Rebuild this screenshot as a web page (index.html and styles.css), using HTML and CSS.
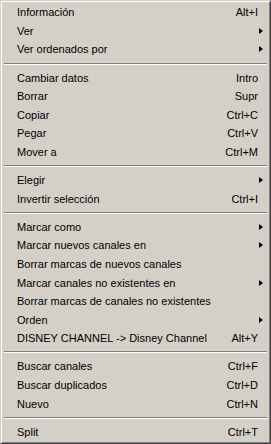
FILE: index.html
```html
<!DOCTYPE html>
<html>
  <head>
    <meta charset="UTF-8">
    <title>Menú</title>
    <link rel="stylesheet" href="styles.css">
  </head>
  <body>
    <div class="menu">
      <div class="item"><span class="label">Información</span><span class="key">Alt+I</span><span class="sub"></span></div>
      <div class="item"><span class="label">Ver</span><span class="key"></span><span class="sub"><i class="arrow"></i></span></div>
      <div class="item"><span class="label">Ver ordenados por</span><span class="key"></span><span class="sub"><i class="arrow"></i></span></div>
      <div class="sep"></div>
      <div class="item"><span class="label">Cambiar datos</span><span class="key">Intro</span><span class="sub"></span></div>
      <div class="item"><span class="label">Borrar</span><span class="key">Supr</span><span class="sub"></span></div>
      <div class="item"><span class="label">Copiar</span><span class="key">Ctrl+C</span><span class="sub"></span></div>
      <div class="item"><span class="label">Pegar</span><span class="key">Ctrl+V</span><span class="sub"></span></div>
      <div class="item"><span class="label">Mover a</span><span class="key">Ctrl+M</span><span class="sub"></span></div>
      <div class="sep"></div>
      <div class="item"><span class="label">Elegir</span><span class="key"></span><span class="sub"><i class="arrow"></i></span></div>
      <div class="item"><span class="label">Invertir selección</span><span class="key">Ctrl+I</span><span class="sub"></span></div>
      <div class="sep"></div>
      <div class="item"><span class="label">Marcar como</span><span class="key"></span><span class="sub"><i class="arrow"></i></span></div>
      <div class="item"><span class="label">Marcar nuevos canales en</span><span class="key"></span><span class="sub"><i class="arrow"></i></span></div>
      <div class="item"><span class="label">Borrar marcas de nuevos canales</span><span class="key"></span><span class="sub"></span></div>
      <div class="item"><span class="label">Marcar canales no existentes en</span><span class="key"></span><span class="sub"><i class="arrow"></i></span></div>
      <div class="item"><span class="label">Borrar marcas de canales no existentes</span><span class="key"></span><span class="sub"></span></div>
      <div class="item"><span class="label">Orden</span><span class="key"></span><span class="sub"><i class="arrow"></i></span></div>
      <div class="item"><span class="label">DISNEY CHANNEL -&gt; Disney Channel</span><span class="key">Alt+Y</span><span class="sub"></span></div>
      <div class="sep"></div>
      <div class="item"><span class="label">Buscar canales</span><span class="key">Ctrl+F</span><span class="sub"></span></div>
      <div class="item"><span class="label">Buscar duplicados</span><span class="key">Ctrl+D</span><span class="sub"></span></div>
      <div class="item"><span class="label">Nuevo</span><span class="key">Ctrl+N</span><span class="sub"></span></div>
      <div class="sep"></div>
      <div class="item"><span class="label">Split</span><span class="key">Ctrl+T</span><span class="sub"></span></div>
    </div>
  </body>
</html>
```

FILE: styles.css
```css
html, body {
  margin: 0;
  padding: 0;
  background: #d4d0c8;
}

/* marco clásico de Windows */
.menu {
  width: 271px;
  height: 444px;
  box-sizing: border-box;
  background: #d4d0c8;
  border: 1px solid;
  border-color: #d4d0c8 #404040 #404040 #d4d0c8;
  box-shadow: inset 1px 1px #fff, inset -1px -1px #808080;
  padding: 2px;
  font-family: "Liberation Sans", Arial, sans-serif;
  font-size: 11px;
  color: #000;
}

.item {
  display: grid;
  grid-template-columns: 1fr auto 10px;
  align-items: center;
  height: 18.6px;
  padding-left: 14px;
  white-space: nowrap;
}

.key {
  text-align: right;
}

.sub {
  display: flex;
  align-items: center;
  padding-left: 1px;
}

.arrow {
  display: block;
  width: 0;
  height: 0;
  border-left: 4px solid #000;
  border-top: 3.5px solid transparent;
  border-bottom: 3.5px solid transparent;
}

.sep {
  height: 9.5px;
  display: flex;
  flex-direction: column;
  justify-content: center;
  padding: 0 1px;
}

.sep::before {
  content: "";
  display: block;
  height: 1px;
  background: #808080;
  border-bottom: 1px solid #fff;
}
```
